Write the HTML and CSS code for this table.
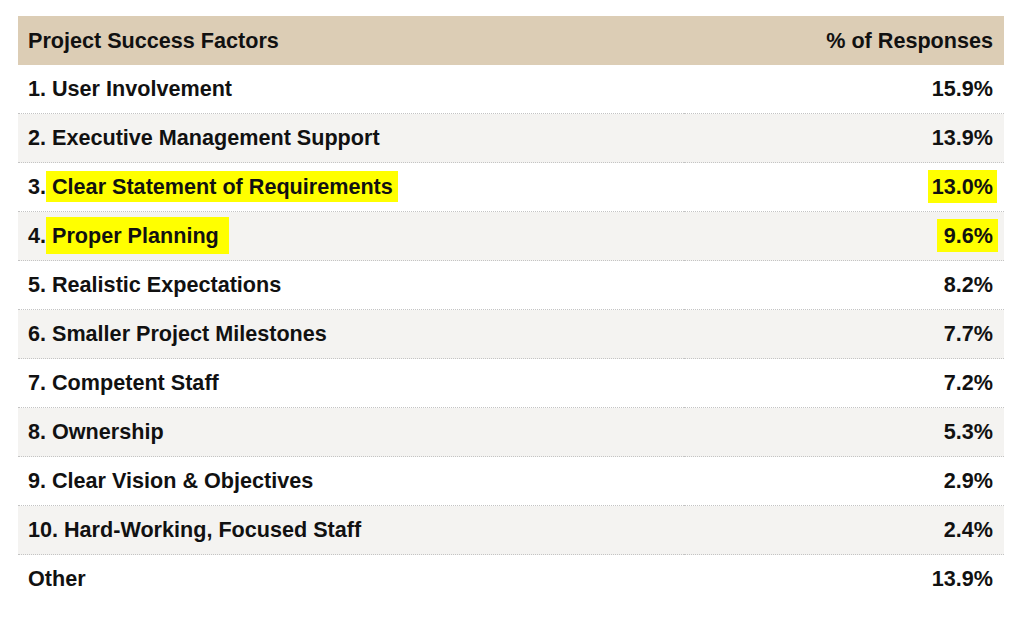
FILE: index.html
```html
<!DOCTYPE html>
<html>
<head>
<meta charset="utf-8">
<link rel="stylesheet" href="styles.css">
</head>
<body>
<table class="factors">
  <thead>
    <tr><th class="name">Project Success Factors</th><th class="pct">% of Responses</th></tr>
  </thead>
  <tbody>
    <tr><td class="name">1. User Involvement</td><td class="pct">15.9%</td></tr>
    <tr><td class="name">2. Executive Management Support</td><td class="pct">13.9%</td></tr>
    <tr><td class="name">3.<span class="hl hl-a">Clear Statement of Requirements</span></td><td class="pct"><span class="hl hl-n1">13.0%</span></td></tr>
    <tr><td class="name">4.<span class="hl hl-b">Proper Planning</span></td><td class="pct"><span class="hl hl-n2">9.6%</span></td></tr>
    <tr><td class="name">5. Realistic Expectations</td><td class="pct">8.2%</td></tr>
    <tr><td class="name">6. Smaller Project Milestones</td><td class="pct">7.7%</td></tr>
    <tr><td class="name">7. Competent Staff</td><td class="pct">7.2%</td></tr>
    <tr><td class="name">8. Ownership</td><td class="pct">5.3%</td></tr>
    <tr><td class="name">9. Clear Vision &amp; Objectives</td><td class="pct">2.9%</td></tr>
    <tr><td class="name">10. Hard-Working, Focused Staff</td><td class="pct">2.4%</td></tr>
    <tr class="last"><td class="name">Other</td><td class="pct">13.9%</td></tr>
  </tbody>
</table>
</body>
</html>
```

FILE: styles.css
```css
html, body {
  margin: 0;
  padding: 0;
  background: #ffffff;
}
body {
  padding: 16px 20px 0 18px;
  font-family: "Liberation Sans", Arial, Helvetica, sans-serif;
  font-weight: bold;
  font-size: 21.6px;
  line-height: 25px;
  color: #111111;
}
.factors {
  width: 986px;
  border-collapse: collapse;
}
.factors th,
.factors td {
  height: 47px;
  padding: 0 11px 1px 10px;
  vertical-align: middle;
  font-weight: bold;
  white-space: nowrap;
}
.factors thead th {
  background: #dccdb5;
  height: 48px;
}
.factors .name { text-align: left; }
.factors .pct { text-align: right; }
.factors tbody tr {
  border-bottom: 1px dotted #c4c4c4;
}
.factors tbody tr:nth-child(even) {
  background: #f4f3f1;
}
.factors tbody tr.last {
  border-bottom: none;
}
.hl {
  background: #ffff00;
  display: inline-block;
}
.hl-a {
  padding: 3px 5px 3px 6px;
}
.hl-b {
  padding: 6px 10px 6px 6px;
}
.hl-n1 {
  padding: 4px 4px 4px 4px;
  margin-right: -4px;
}
.hl-n2 {
  padding: 4px 5px 4px 7px;
  margin-right: -5px;
}
```
